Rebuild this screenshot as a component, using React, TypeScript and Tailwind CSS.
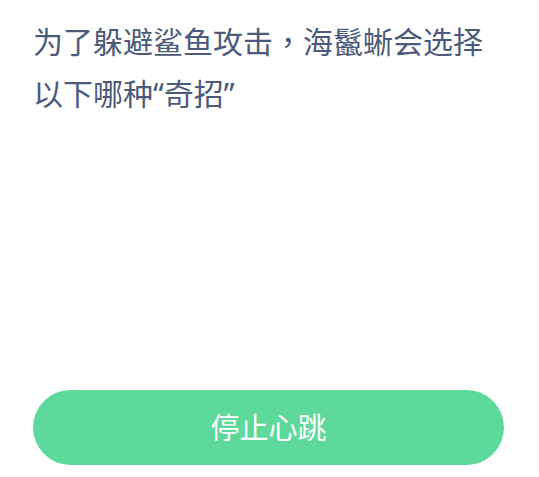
import React from 'react';

const App: React.FC = () => {
    return (
        <div className="w-[539px] h-[477px] bg-white flex flex-col justify-between px-[33px] pt-[14px] pb-[12px] font-['Noto_Sans','Noto_Sans_CJK_SC',sans-serif]">
            <h1 className="text-[30px] leading-[52px] font-normal text-[#4b5a7a]">
                为了躲避鲨鱼攻击<span className="font-['Noto_Sans_CJK_TC',sans-serif]">，</span>海鬣蜥会选择以下哪种“奇招”
            </h1>
            <button className="w-[471px] h-[75px] rounded-full bg-[#5dd99b] text-white text-[29px] flex items-center justify-center">
                停止心跳
            </button>
        </div>
    );
};

export default App;
